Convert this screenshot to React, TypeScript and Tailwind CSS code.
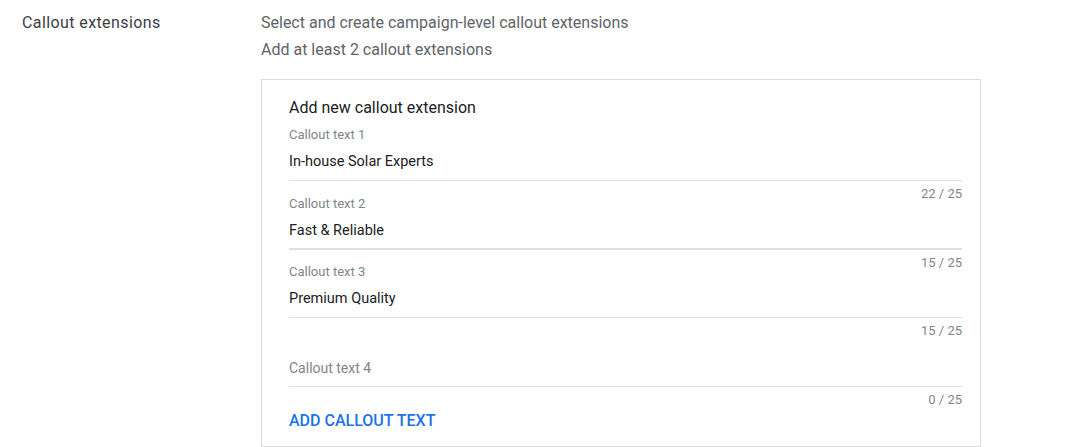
import React from 'react';

type Field = { label: string; value: string; count: string; thick?: boolean };

const fields: Field[] = [
    { label: 'Callout text 1', value: 'In-house Solar Experts', count: '22 / 25' },
    { label: 'Callout text 2', value: 'Fast & Reliable', count: '15 / 25', thick: true },
    { label: 'Callout text 3', value: 'Premium Quality', count: '15 / 25' },
    { label: 'Callout text 4', value: '', count: '0 / 25' },
];

function CalloutField({ field }: { field: Field }) {
    const empty = !field.value;
    return (
        <div className={`relative flex flex-col ${field.thick ? 'mb-[14px]' : 'mb-[15px]'}`}>
            {/* Floating label */}
            <div className={`h-[16px] text-[13px] leading-[16px] text-[#80868b] ${empty ? 'invisible' : ''}`}>
                {field.label}
            </div>
            <div className={`mt-[9px] h-[20px] leading-[20px] ${empty ? 'text-[14px] text-[#80868b]' : 'text-[14.5px] text-[#202124]'}`}>
                {empty ? field.label : field.value}
            </div>
            <div className={field.thick ? 'mt-[7px] h-[2px] bg-[#e0e0e0]' : 'mt-[8px] h-px bg-[#e0e0e0]'} />
            {/* Character counter */}
            <div className="absolute right-0 top-[59px] text-[13px] leading-[16px] text-[#80868b]">
                {field.count}
            </div>
        </div>
    );
}

export default function App() {
    return (
        <div className="w-[1084px] h-[447px] overflow-hidden bg-white flex pt-[13px] font-['Roboto',sans-serif]">
            <div className="w-[261px] pl-[22px] text-[16px] tracking-[0.4px] leading-[20px] text-[#3c4043]">
                Callout extensions
            </div>

            <div className="flex flex-col">
                <div className="text-[16px] leading-[20px] text-[#5f6368]">
                    Select and create campaign-level callout extensions
                </div>
                <div className="mt-[7px] text-[16px] leading-[20px] text-[#5f6368]">
                    Add at least 2 callout extensions
                </div>

                <div className="mt-[19px] w-[720px] h-[400px] border border-[#dadce0] pl-[27px] pr-[18px] pt-[18px]">
                    <div className="text-[16px] leading-[20px] text-[#202124] mb-[9px]">
                        Add new callout extension
                    </div>

                    {fields.map((f) => (
                        <CalloutField key={f.label} field={f} />
                    ))}

                    <button className="mt-[9px] text-[16px] leading-[20px] font-medium text-[#1a73e8] uppercase">
                        Add callout text
                    </button>
                </div>
            </div>
        </div>
    );
}
